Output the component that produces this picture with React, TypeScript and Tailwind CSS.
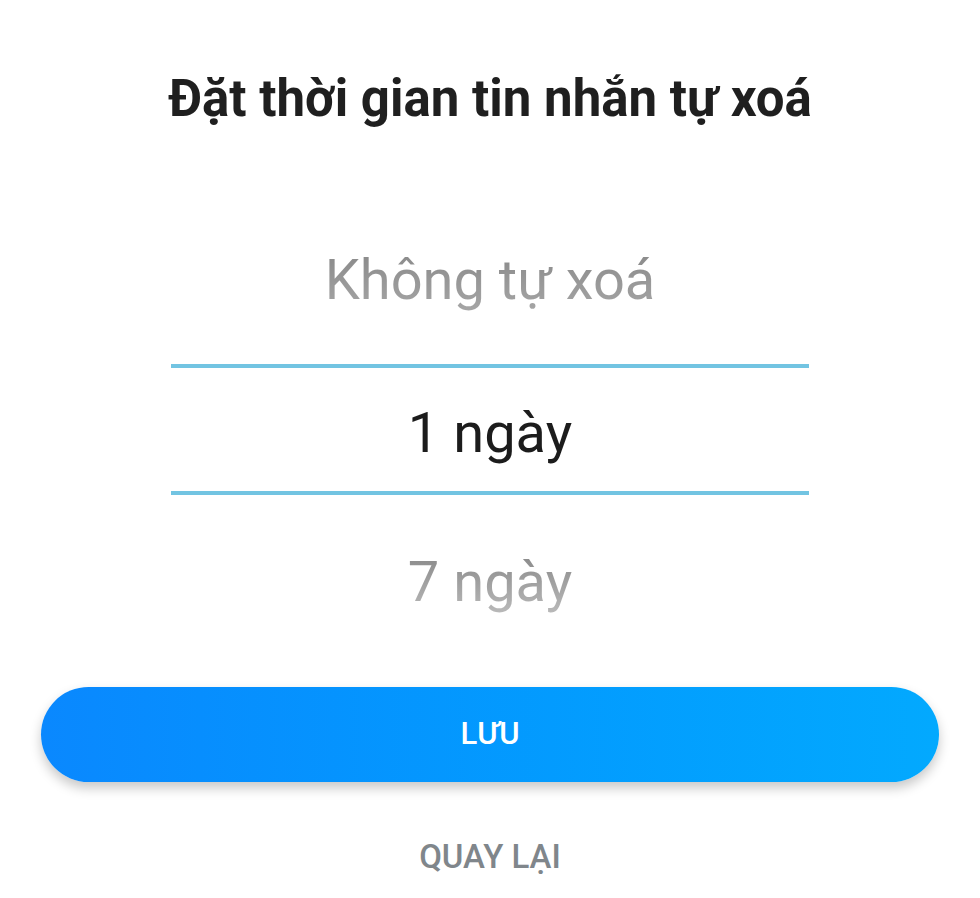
export default function App() {
  const font = { fontFamily: 'Roboto, "Noto Sans", sans-serif' }
  return (
    <div
      className="w-[980px] h-[898px] bg-white flex flex-col items-center overflow-hidden"
      style={font}
    >
      <h1 className="pt-[69px] mb-[1px] text-[51px] leading-[60px] font-bold text-[#1f1f1f]">
        Đặt thời gian tin nhắn tự xoá
      </h1>

      <div className="w-[638px] mt-[80px] flex flex-col">
        <div className="h-[154px] flex items-center justify-center pb-[6px]">
          <span className="text-[56px] leading-none bg-gradient-to-b from-[#8a8a8a] to-[#a8a8a8] bg-clip-text text-transparent pb-[8px]">
            Không tự xoá
          </span>
        </div>
        <div className="h-[131px] border-y-4 border-[#72c4e2] flex items-center justify-center pt-[7px]">
          <span className="text-[56px] leading-none text-[#1c1c1c]">1 ngày</span>
        </div>
        <div className="h-[182px] flex items-center justify-center">
          <span className="text-[56px] leading-none bg-gradient-to-b from-[#8a8a8a] to-[#bdbdbd] bg-clip-text text-transparent pb-[8px]">
            7 ngày
          </span>
        </div>
      </div>

      <button className="mt-[10px] w-[898px] h-[95px] rounded-full bg-gradient-to-r from-[#0a88fe] to-[#03a9fe] shadow-[0_6px_12px_rgba(0,0,0,0.22)] text-white text-[31px] font-medium">
        LƯU
      </button>

      <div className="mt-[55px] text-[33px] leading-[40px] font-medium text-[#80868b]">QUAY LẠI</div>
    </div>
  )
}
